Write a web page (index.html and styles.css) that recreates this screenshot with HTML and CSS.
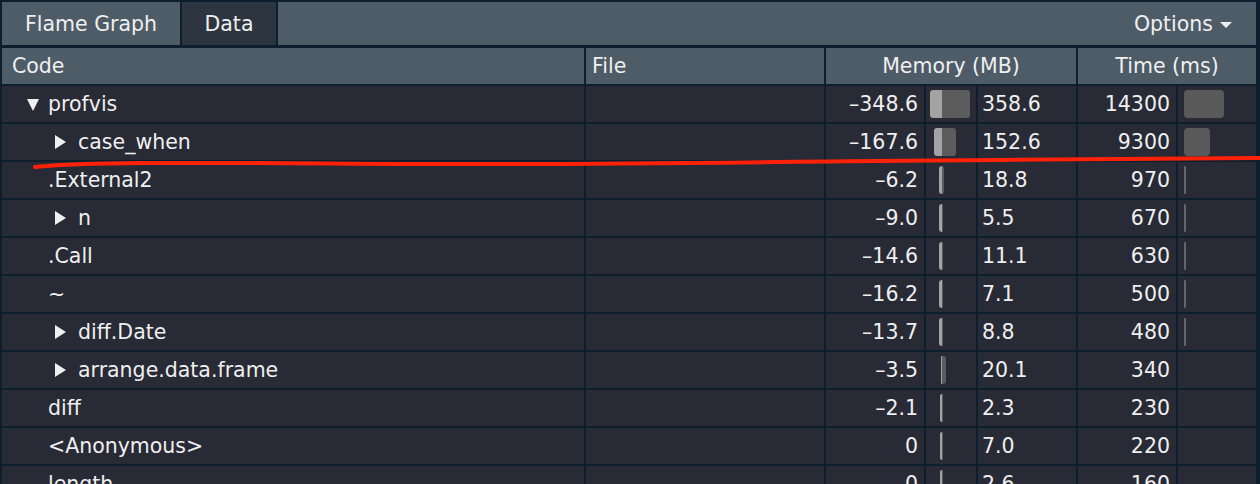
FILE: index.html
```html
<!DOCTYPE html>
<html>
<head>
<meta charset="utf-8">
<link rel="stylesheet" href="styles.css">
</head>
<body>
<div class="app">
  <div class="tabs">
    <div class="tab first">Flame Graph</div>
    <div class="tab active">Data</div>
    <div class="spacer"></div>
    <div class="options">Options <span class="caret"></span></div>
  </div>
  <div class="table">
    <div class="row head">
      <div class="cell code-h">Code</div>
      <div class="cell file-h">File</div>
      <div class="cell mem-h">Memory (MB)</div>
      <div class="cell time-h">Time (ms)</div>
    </div>

    <div class="row">
      <div class="cell code root"><span class="tri down"></span>profvis</div>
      <div class="cell"></div>
      <div class="cell num">–348.6</div>
      <div class="cell mbar"><div class="axis"><span class="neg" style="width:12px"></span></div><span class="pos" style="width:28px"></span></div>
      <div class="cell val">358.6</div>
      <div class="cell num">14300</div>
      <div class="cell tbar"><span class="t" style="width:40px"></span></div>
    </div>

    <div class="row">
      <div class="cell code child"><span class="tri right"></span>case_when</div>
      <div class="cell"></div>
      <div class="cell num">–167.6</div>
      <div class="cell mbar"><div class="axis"><span class="neg" style="width:8px"></span></div><span class="pos" style="width:14px"></span></div>
      <div class="cell val">152.6</div>
      <div class="cell num">9300</div>
      <div class="cell tbar"><span class="t" style="width:26px"></span></div>
    </div>

    <div class="row">
      <div class="cell code leaf">.External2</div>
      <div class="cell"></div>
      <div class="cell num">–6.2</div>
      <div class="cell mbar"><div class="axis"><span class="neg" style="width:3px"></span></div><span class="pos" style="width:2px"></span></div>
      <div class="cell val">18.8</div>
      <div class="cell num">970</div>
      <div class="cell tbar"><span class="t thin" style="width:2px"></span></div>
    </div>

    <div class="row">
      <div class="cell code child"><span class="tri right"></span>n</div>
      <div class="cell"></div>
      <div class="cell num">–9.0</div>
      <div class="cell mbar"><div class="axis"><span class="neg" style="width:3px"></span></div><span class="pos" style="width:1px"></span></div>
      <div class="cell val">5.5</div>
      <div class="cell num">670</div>
      <div class="cell tbar"><span class="t thin" style="width:2px"></span></div>
    </div>

    <div class="row">
      <div class="cell code leaf">.Call</div>
      <div class="cell"></div>
      <div class="cell num">–14.6</div>
      <div class="cell mbar"><div class="axis"><span class="neg" style="width:3px"></span></div><span class="pos" style="width:1px"></span></div>
      <div class="cell val">11.1</div>
      <div class="cell num">630</div>
      <div class="cell tbar"><span class="t thin" style="width:2px"></span></div>
    </div>

    <div class="row">
      <div class="cell code leaf">~</div>
      <div class="cell"></div>
      <div class="cell num">–16.2</div>
      <div class="cell mbar"><div class="axis"><span class="neg" style="width:3px"></span></div><span class="pos" style="width:1px"></span></div>
      <div class="cell val">7.1</div>
      <div class="cell num">500</div>
      <div class="cell tbar"><span class="t thin" style="width:2px"></span></div>
    </div>

    <div class="row">
      <div class="cell code child"><span class="tri right"></span>diff.Date</div>
      <div class="cell"></div>
      <div class="cell num">–13.7</div>
      <div class="cell mbar"><div class="axis"><span class="neg" style="width:3px"></span></div><span class="pos" style="width:1px"></span></div>
      <div class="cell val">8.8</div>
      <div class="cell num">480</div>
      <div class="cell tbar"><span class="t thin" style="width:2px"></span></div>
    </div>

    <div class="row">
      <div class="cell code child"><span class="tri right"></span>arrange.data.frame</div>
      <div class="cell"></div>
      <div class="cell num">–3.5</div>
      <div class="cell mbar"><div class="axis"><span class="neg" style="width:1px"></span></div><span class="pos" style="width:4px"></span></div>
      <div class="cell val">20.1</div>
      <div class="cell num">340</div>
      <div class="cell tbar"></div>
    </div>

    <div class="row">
      <div class="cell code leaf">diff</div>
      <div class="cell"></div>
      <div class="cell num">–2.1</div>
      <div class="cell mbar"><div class="axis"><span class="neg" style="width:2px"></span></div><span class="pos" style="width:1px"></span></div>
      <div class="cell val">2.3</div>
      <div class="cell num">230</div>
      <div class="cell tbar"></div>
    </div>

    <div class="row">
      <div class="cell code leaf">&lt;Anonymous&gt;</div>
      <div class="cell"></div>
      <div class="cell num">0</div>
      <div class="cell mbar"><div class="axis"><span class="neg" style="width:2px"></span></div><span class="pos" style="width:1px"></span></div>
      <div class="cell val">7.0</div>
      <div class="cell num">220</div>
      <div class="cell tbar"></div>
    </div>

    <div class="row">
      <div class="cell code leaf">length</div>
      <div class="cell"></div>
      <div class="cell num">0</div>
      <div class="cell mbar"><div class="axis"><span class="neg" style="width:2px"></span></div><span class="pos" style="width:1px"></span></div>
      <div class="cell val">2.6</div>
      <div class="cell num">160</div>
      <div class="cell tbar"></div>
    </div>
  </div>
</div>
<svg class="mark" width="1260" height="484" viewBox="0 0 1260 484">
  <path d="M35 167 C 90 161, 220 163, 420 164 S 800 161, 1000 160 S 1200 158, 1262 158" fill="none" stroke="#ff2208" stroke-width="4" stroke-linecap="round"/>
</svg>
</body>
</html>
```

FILE: styles.css
```css
html, body {
  margin: 0;
  padding: 0;
}
body {
  background: #0d1e2f;
  width: 1260px;
  height: 484px;
  overflow: hidden;
  position: relative;
  font-family: "DejaVu Sans", "Liberation Sans", sans-serif;
  font-size: 20.5px;
  color: #efefef;
}
.app {
  padding: 2px 4px 0 2px;
  display: flex;
  flex-direction: column;
  gap: 3px;
}
.tabs {
  height: 43px;
  display: flex;
  align-items: stretch;
  background: #4e5c68;
  white-space: nowrap;
}
.tab {
  box-sizing: border-box;
  display: flex;
  align-items: center;
  justify-content: center;
  flex-shrink: 0;
  border-right: 2px solid #0d1e2f;
}
.tab.first {
  width: 180px;
}
.tab.active {
  background: #2d3640;
  width: 96px;
}
.spacer {
  flex: 1;
}
.options {
  display: flex;
  align-items: center;
  padding-right: 24px;
  gap: 7px;
}
.caret {
  width: 0;
  height: 0;
  border-left: 6px solid transparent;
  border-right: 6px solid transparent;
  border-top: 6px solid #efefef;
  margin-top: 2px;
}
.table {
  display: flex;
  flex-direction: column;
  gap: 2px;
}
.row {
  display: grid;
  grid-template-columns: 582px 238px 98px 50px 98px 98px 78px;
  column-gap: 2px;
  height: 36px;
}
.cell {
  background: #282a35;
  display: flex;
  align-items: center;
  white-space: nowrap;
  overflow: hidden;
}
.head .cell {
  background: #4e5c68;
}
.code-h {
  padding-left: 10px;
}
.file-h {
  padding-left: 6px;
}
.mem-h {
  grid-column: span 3;
  justify-content: center;
}
.time-h {
  grid-column: span 2;
  justify-content: center;
}
.code.root {
  padding-left: 25px;
}
.code.child {
  padding-left: 53px;
}
.code.leaf {
  padding-left: 46px;
}
.tri {
  display: inline-block;
  width: 0;
  height: 0;
}
.tri.down {
  border-left: 6px solid transparent;
  border-right: 6px solid transparent;
  border-top: 12px solid #efefef;
  margin-right: 9px;
  margin-top: 2px;
}
.tri.right {
  border-top: 7px solid transparent;
  border-bottom: 7px solid transparent;
  border-left: 11px solid #efefef;
  margin-right: 12px;
}
.num {
  justify-content: flex-end;
  padding-right: 6px;
}
.val {
  padding-left: 4px;
}
.axis {
  width: 16px;
  display: flex;
  justify-content: flex-end;
  flex-shrink: 0;
}
.neg {
  display: block;
  height: 28px;
  background: #a3a3a3;
  border-radius: 3px 0 0 3px;
}
.pos {
  display: block;
  height: 28px;
  background: #5c5c5c;
  border-radius: 0 3px 3px 0;
}
.tbar {
  padding-left: 6px;
}
.t {
  display: block;
  height: 28px;
  background: #595959;
  border-radius: 4px;
}
.t.thin {
  border-radius: 1px;
  background: #666;
}
.mark {
  position: absolute;
  left: 0;
  top: 0;
  pointer-events: none;
}
```
